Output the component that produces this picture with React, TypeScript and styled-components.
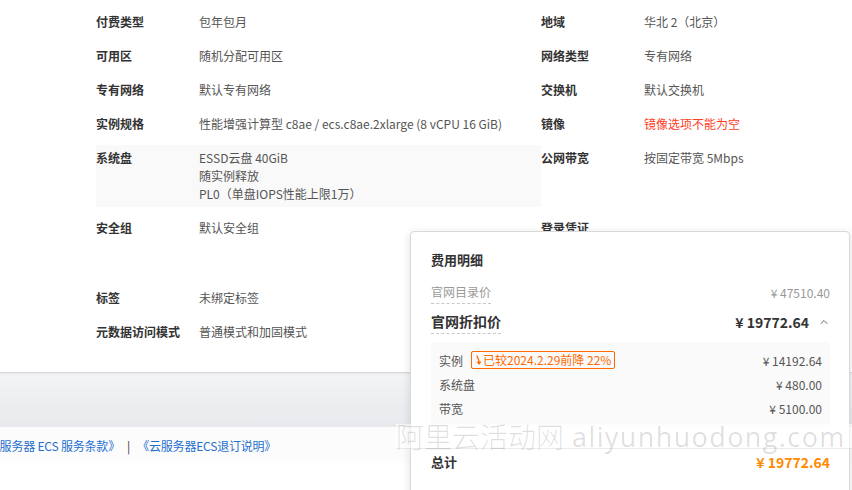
import React from "react";
import styled, { createGlobalStyle } from "styled-components";
import { ChevronUp } from "lucide-react";

const GlobalStyle = createGlobalStyle`
  html, body {
    margin: 0;
    padding: 0;
    background: #ffffff;
    overflow: hidden;
  }
  body {
    font-family: "Noto Sans CJK SC", "Noto Sans", "Liberation Sans", sans-serif;
    font-size: 12px;
    color: #333;
  }
`;

const Page = styled.div`
  position: relative;
  width: 852px;
  height: 490px;
  overflow: hidden;
  background: #fff;
`;

const InfoSection = styled.section`
  height: 363px;
  padding: 9px 0 0 96px;
  background: #fff;
  border-bottom: 1px solid #d6d7da;
  box-shadow: 0 1px 2px rgba(0, 0, 0, 0.06);
  position: relative;
  z-index: 1;
`;

const InfoGrid = styled.div`
  display: grid;
  grid-template-columns: 445px 1fr;
  row-gap: 8px;
`;

const Cell = styled.div<{ $shaded?: boolean; $minH?: number }>`
  display: flex;
  align-items: flex-start;
  padding: 4px 0;
  line-height: 18px;
  min-height: ${(p) => (p.$minH ? `${p.$minH}px` : "18px")};
  background: ${(p) => (p.$shaded ? "#f9f9f9" : "transparent")};
`;

const Label = styled.div`
  width: 103px;
  flex-shrink: 0;
  font-weight: 700;
  color: #333;
`;

const Value = styled.div<{ $error?: boolean }>`
  color: ${(p) => (p.$error ? "#ff3d1f" : "#555")};
  white-space: nowrap;
`;

const GrayBand = styled.div`
  height: 54px;
  background: linear-gradient(#f3f4f6, #e8e9ec);
`;

const LinksBar = styled.div`
  height: 36px;
  display: flex;
  align-items: center;
  gap: 7px;
  margin-left: -24px;
  background: #fcfcfc;
  font-size: 12px;
`;

const TermLink = styled.a`
  color: #1f6fcf;
  text-decoration: none;
  white-space: nowrap;
  letter-spacing: -0.2px;
`;

const Sep = styled.span`
  color: #333;
`;

const CostPopup = styled.div`
  position: absolute;
  left: 410px;
  top: 231px;
  width: 399px;
  height: 300px;
  padding: 18px 19px 0 20px;
  background: #fff;
  border: 1px solid #d9d9d9;
  border-radius: 4px;
  box-shadow: 0 2px 10px rgba(0, 0, 0, 0.12);
  z-index: 2;
`;

const PopupTitle = styled.div`
  font-size: 13px;
  font-weight: 700;
  line-height: 20px;
  color: #333;
`;

const PriceRow = styled.div<{ $strong?: boolean; $gap: number }>`
  display: flex;
  align-items: center;
  justify-content: space-between;
  margin-top: ${(p) => p.$gap}px;
  line-height: ${(p) => (p.$strong ? "22px" : "20px")};
  font-size: ${(p) => (p.$strong ? "14px" : "12px")};
  font-weight: ${(p) => (p.$strong ? 700 : 400)};
  color: ${(p) => (p.$strong ? "#333" : "#999")};
`;

const DashedTerm = styled.span`
  border-bottom: 1px dashed #c8c8c8;
  padding-bottom: 1px;
`;

const PriceRight = styled.span`
  display: flex;
  align-items: center;
  gap: 9px;
`;

const Breakdown = styled.div`
  margin-top: 8px;
  padding: 6px 8px;
  background: #fafafa;
`;

const BreakRow = styled.div`
  display: flex;
  align-items: center;
  height: 24px;
  color: #555;
`;

const BreakName = styled.span`
  margin-right: 8px;
`;

const Badge = styled.span`
  display: inline-flex;
  align-items: center;
  height: 16px;
  padding: 0 3px 0 2px;
  border: 1px solid #ff6a00;
  border-radius: 2px;
  color: #ff6a00;
  font-size: 12px;
  line-height: 16px;
`;

const BreakPrice = styled.span`
  margin-left: auto;
  color: #555;
`;

const TotalRow = styled.div`
  display: flex;
  align-items: center;
  justify-content: space-between;
  margin-top: 25px;
  line-height: 22px;
`;

const TotalLabel = styled.span`
  font-size: 13px;
  font-weight: 700;
  color: #333;
`;

const TotalPrice = styled.span`
  font-size: 14px;
  font-weight: 700;
  color: #ff8a00;
`;

const Watermark = styled.div`
  position: absolute;
  left: 396px;
  top: 424px;
  width: 456px;
  height: 24px;
  display: flex;
  align-items: center;
  gap: 8px;
  background: rgba(255, 255, 255, 0.55);
  border-bottom: 1px solid rgba(0, 0, 0, 0.08);
  font-size: 28px;
  font-weight: 300;
  color: rgba(0, 0, 0, 0.13);
  white-space: nowrap;
  z-index: 3;
  pointer-events: none;
`;

const WatermarkLatin = styled.span`
  font-family: "Open Sans", "Noto Sans", sans-serif;
  font-size: 27px;
  font-weight: 400;
  letter-spacing: 1.4px;
`;

const DownArrow = () => (
  <svg width="9" height="11" viewBox="0 0 9 11" fill="none">
    <path d="M3 1 C3.5 3 5 4 5 7" stroke="#ff6a00" strokeWidth="1.3" strokeLinecap="round" />
    <path d="M2.5 6.5 L5 10 L7.5 6.5 Z" fill="#ff6a00" />
  </svg>
);

const leftRows = [
  { label: "付费类型", value: "包年包月" },
  { label: "可用区", value: "随机分配可用区" },
  { label: "专有网络", value: "默认专有网络" },
  { label: "实例规格", value: "性能增强计算型 c8ae / ecs.c8ae.2xlarge (8 vCPU 16 GiB)" },
];

const rightRows = [
  { label: "地域", value: "华北 2（北京）" },
  { label: "网络类型", value: "专有网络" },
  { label: "交换机", value: "默认交换机" },
  { label: "镜像", value: "镜像选项不能为空", error: true },
];

export default function App() {
  return (
    <Page>
      <GlobalStyle />
      <InfoSection>
        <InfoGrid>
          {leftRows.map((row, i) => (
            <React.Fragment key={row.label}>
              <Cell>
                <Label>{row.label}</Label>
                <Value>{row.value}</Value>
              </Cell>
              <Cell>
                <Label>{rightRows[i].label}</Label>
                <Value $error={rightRows[i].error}>{rightRows[i].value}</Value>
              </Cell>
            </React.Fragment>
          ))}
          <Cell $shaded>
            <Label>系统盘</Label>
            <Value>
              ESSD云盘 40GiB
              <br />
              随实例释放
              <br />
              PL0（单盘IOPS性能上限1万）
            </Value>
          </Cell>
          <Cell>
            <Label>公网带宽</Label>
            <Value>按固定带宽 5Mbps</Value>
          </Cell>
          <Cell $minH={54}>
            <Label>安全组</Label>
            <Value>默认安全组</Value>
          </Cell>
          <Cell $minH={54}>
            <Label>登录凭证</Label>
            <Value />
          </Cell>
          <Cell>
            <Label>标签</Label>
            <Value>未绑定标签</Value>
          </Cell>
          <Cell />
          <Cell>
            <Label>元数据访问模式</Label>
            <Value>普通模式和加固模式</Value>
          </Cell>
          <Cell />
        </InfoGrid>
      </InfoSection>
      <GrayBand />
      <LinksBar>
        <TermLink href="#">《云服务器 ECS 服务条款》</TermLink>
        <Sep>|</Sep>
        <TermLink href="#">《云服务器ECS退订说明》</TermLink>
      </LinksBar>

      <CostPopup>
        <PopupTitle>费用明细</PopupTitle>
        <PriceRow $gap={12}>
          <DashedTerm>官网目录价</DashedTerm>
          <span>¥ 47510.40</span>
        </PriceRow>
        <PriceRow $strong $gap={6}>
          <DashedTerm>官网折扣价</DashedTerm>
          <PriceRight>
            ¥ 19772.64
            <ChevronUp size={12} color="#666" strokeWidth={2} />
          </PriceRight>
        </PriceRow>
        <Breakdown>
          <BreakRow>
            <BreakName>实例</BreakName>
            <Badge>
              <DownArrow />
              已较2024.2.29前降 22%
            </Badge>
            <BreakPrice>¥ 14192.64</BreakPrice>
          </BreakRow>
          <BreakRow>
            <BreakName>系统盘</BreakName>
            <BreakPrice>¥ 480.00</BreakPrice>
          </BreakRow>
          <BreakRow>
            <BreakName>带宽</BreakName>
            <BreakPrice>¥ 5100.00</BreakPrice>
          </BreakRow>
        </Breakdown>
        <TotalRow>
          <TotalLabel>总计</TotalLabel>
          <TotalPrice>¥ 19772.64</TotalPrice>
        </TotalRow>
      </CostPopup>

      <Watermark>
        阿里云活动网
        <WatermarkLatin>aliyunhuodong.com</WatermarkLatin>
      </Watermark>
    </Page>
  );
}
